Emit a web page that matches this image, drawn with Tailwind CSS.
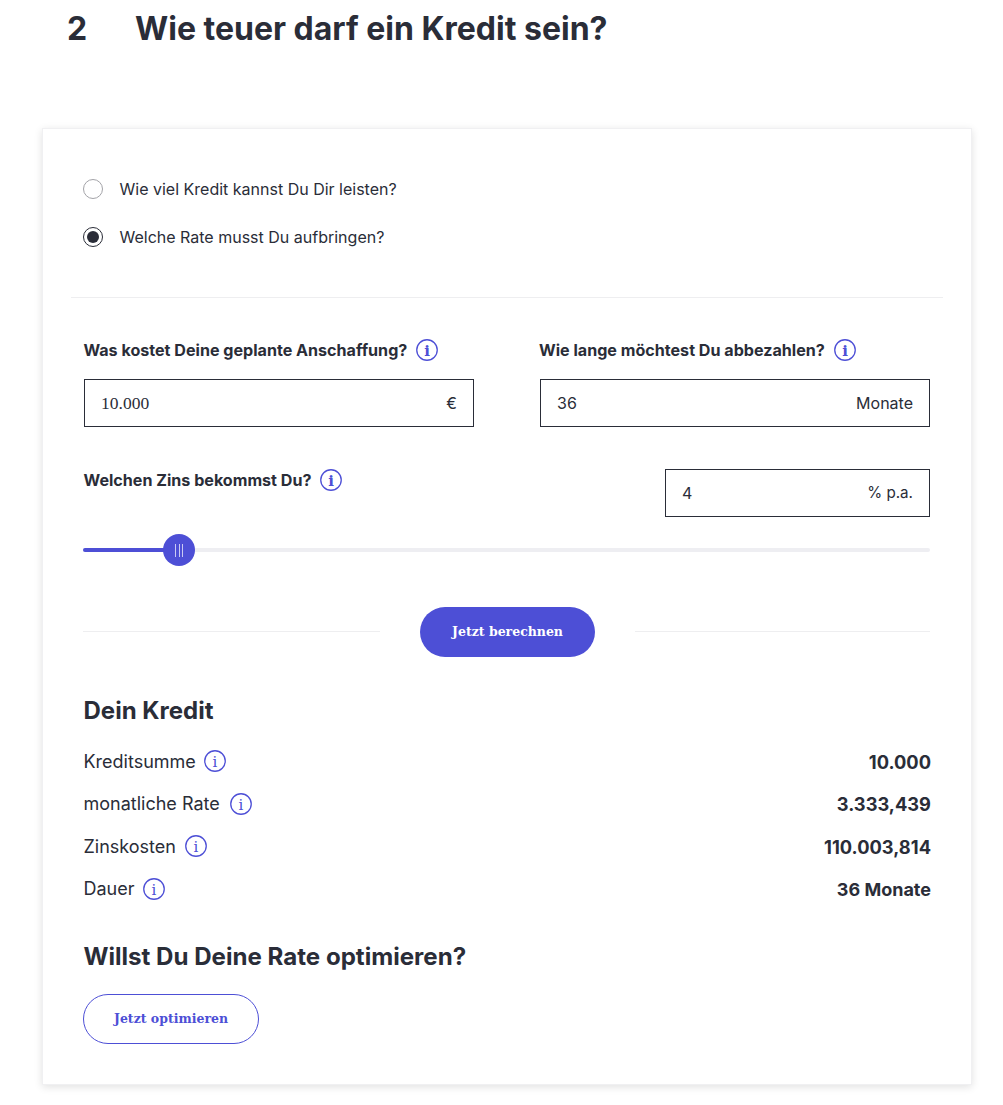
<!DOCTYPE html>
<html lang="de">
<head>
    <meta charset="UTF-8">
    <meta name="viewport" content="width=device-width, initial-scale=1.0">
    <title>Kreditrechner</title>
    <script src="https://cdn.jsdelivr.net/npm/@tailwindcss/browser@4"></script>
</head>
<body class="bg-white text-[#2a2d38] font-['Inter',sans-serif] h-[1105px] overflow-hidden">

    <!-- Section heading -->
    <div class="flex items-center h-[58px] pl-[67px] text-[32px] font-bold">
        <span class="w-[68px]">2</span>
        <h1>Wie teuer darf ein Kredit sein?</h1>
    </div>

    <main class="ml-[42px] mt-[70px] w-[930px] h-[957px] border border-[#f0f0f2] shadow-[0_2px_8px_rgba(0,0,0,0.12)] flex flex-col">

        <!-- Radio options -->
        <div class="mx-[28px] pl-[12px] pt-[50px] h-[169px] border-b border-[#eeeef0] flex flex-col gap-[28px] text-[16px]">
            <label class="flex items-center gap-[16px] h-[20px]">
                <span class="w-[20px] h-[20px] rounded-full border border-[#a3a3a8]"></span>
                <span class="pl-[0.5px]">Wie viel Kredit kannst Du Dir leisten?</span>
            </label>
            <label class="flex items-center gap-[16px] h-[20px]">
                <span class="w-[20px] h-[20px] rounded-full border-[1.5px] border-[#2a2d38] flex items-center justify-center">
                    <span class="w-[12px] h-[12px] rounded-full bg-[#2a2d38]"></span>
                </span>
                <span class="pl-[0.5px]">Welche Rate musst Du aufbringen?</span>
            </label>
        </div>

        <div class="pl-[40px] pr-[41px]">
            <!-- Amount and duration -->
            <div class="grid grid-cols-[391px_391px] gap-x-[65px] pt-[41px]">
                <div>
                    <div class="flex items-center gap-[9px] h-[22px] text-[16.1px] font-bold">
                        <span class="pl-[0.5px]">Was kostet Deine geplante Anschaffung?</span>
                        <svg class="w-[22px] h-[22px]" viewBox="0 0 22 22" fill="none"><circle cx="11" cy="11" r="10.25" stroke="#4d4fd6" stroke-width="1.3"/><text x="11" y="16.5" text-anchor="middle" font-family="DejaVu Serif" font-size="15" fill="#4d4fd6">i</text></svg>
                    </div>
                    <div class="mt-[18px] ml-[1px] h-[48px] border border-[#2a2d38] px-[16px] flex items-center justify-between text-[16px]">
                        <span class="font-['Liberation_Serif',serif] text-[17.5px]">10.000</span>
                        <span>€</span>
                    </div>
                </div>
                <div>
                    <div class="flex items-center gap-[9px] h-[22px] text-[16.1px] font-bold">
                        <span>Wie lange möchtest Du abbezahlen?</span>
                        <svg class="w-[22px] h-[22px]" viewBox="0 0 22 22" fill="none"><circle cx="11" cy="11" r="10.25" stroke="#4d4fd6" stroke-width="1.3"/><text x="11" y="16.5" text-anchor="middle" font-family="DejaVu Serif" font-size="15" fill="#4d4fd6">i</text></svg>
                    </div>
                    <div class="mt-[18px] ml-[1px] h-[48px] border border-[#2a2d38] px-[16px] flex items-center justify-between text-[16px]">
                        <span>36</span>
                        <span>Monate</span>
                    </div>
                </div>
            </div>

            <!-- Interest rate -->
            <div class="flex justify-between items-start mt-[42px]">
                <div class="flex items-center gap-[8.5px] h-[22px] text-[16.1px] font-bold">
                    <span class="pl-[0.5px]">Welchen Zins bekommst Du?</span>
                    <svg class="w-[22px] h-[22px]" viewBox="0 0 22 22" fill="none"><circle cx="11" cy="11" r="10.25" stroke="#4d4fd6" stroke-width="1.3"/><text x="11" y="16.5" text-anchor="middle" font-family="DejaVu Serif" font-size="15" fill="#4d4fd6">i</text></svg>
                </div>
                <div class="w-[265px] h-[48px] border border-[#2a2d38] px-[16px] flex items-center justify-between text-[16px]">
                    <span>4</span>
                    <span class="text-[15.2px]">% p.a.</span>
                </div>
            </div>

            <!-- Slider -->
            <div class="relative h-[4px] mt-[31px] rounded-full bg-[#eeeef2]">
                <div class="h-full w-[90px] rounded-full bg-[#4d4fd6]"></div>
                <div class="absolute left-[80px] top-[-14px] w-[32px] h-[32px] rounded-full bg-[#4d4fd6] flex items-center justify-center gap-[2.5px]">
                    <span class="w-px h-[13px] bg-white/70"></span>
                    <span class="w-px h-[13px] bg-white/70"></span>
                    <span class="w-px h-[13px] bg-white/70"></span>
                </div>
            </div>

            <!-- Calculate -->
            <div class="flex items-center mt-[55px]">
                <div class="w-[297px] h-px mb-[2px] bg-[#eeeef0]"></div>
                <button class="ml-[40px] w-[175px] h-[50px] rounded-full bg-[#4d4fd6] text-white text-[12.5px] font-bold font-['DejaVu_Serif',serif]">Jetzt berechnen</button>
                <div class="ml-[40px] flex-1 h-px mb-[2px] bg-[#eeeef0]"></div>
            </div>

            <!-- Result -->
            <h2 class="mt-[38px] pl-[0.5px] text-[24px] leading-[32px] font-bold">Dein Kredit</h2>
            <dl class="mt-[13px] pl-[0.5px] text-[18px]">
                <div class="flex items-center justify-between h-[42.5px]">
                    <dt class="flex items-center gap-[8.5px]">Kreditsumme
                        <svg class="w-[22px] h-[22px]" viewBox="0 0 22 22" fill="none"><circle cx="11" cy="11" r="10.25" stroke="#4d4fd6" stroke-width="1.3"/><text x="11" y="16.5" text-anchor="middle" font-family="DejaVu Serif" font-size="15" fill="#4d4fd6">i</text></svg>
                    </dt>
                    <dd class="pt-[2px] mr-[-1px] font-bold text-[18.3px]">10.000</dd>
                </div>
                <div class="flex items-center justify-between h-[42.5px]">
                    <dt class="flex items-center gap-[10.5px]">monatliche Rate
                        <svg class="w-[22px] h-[22px]" viewBox="0 0 22 22" fill="none"><circle cx="11" cy="11" r="10.25" stroke="#4d4fd6" stroke-width="1.3"/><text x="11" y="16.5" text-anchor="middle" font-family="DejaVu Serif" font-size="15" fill="#4d4fd6">i</text></svg>
                    </dt>
                    <dd class="pt-[2px] mr-[-1px] font-bold text-[18.3px]">3.333,439</dd>
                </div>
                <div class="flex items-center justify-between h-[42.5px]">
                    <dt class="flex items-center gap-[9.5px]">Zinskosten
                        <svg class="w-[22px] h-[22px]" viewBox="0 0 22 22" fill="none"><circle cx="11" cy="11" r="10.25" stroke="#4d4fd6" stroke-width="1.3"/><text x="11" y="16.5" text-anchor="middle" font-family="DejaVu Serif" font-size="15" fill="#4d4fd6">i</text></svg>
                    </dt>
                    <dd class="pt-[2px] mr-[-1px] font-bold text-[18.3px]">110.003,814</dd>
                </div>
                <div class="flex items-center justify-between h-[42.5px]">
                    <dt class="flex items-center gap-[8.5px]">Dauer
                        <svg class="w-[22px] h-[22px]" viewBox="0 0 22 22" fill="none"><circle cx="11" cy="11" r="10.25" stroke="#4d4fd6" stroke-width="1.3"/><text x="11" y="16.5" text-anchor="middle" font-family="DejaVu Serif" font-size="15" fill="#4d4fd6">i</text></svg>
                    </dt>
                    <dd class="pt-[2px] mr-[-1px] font-bold text-[18px]">36 Monate</dd>
                </div>
            </dl>

            <h2 class="mt-[31px] pl-[0.5px] text-[24.1px] leading-[32px] font-bold">Willst Du Deine Rate optimieren?</h2>
            <button class="mt-[21px] w-[176px] h-[50px] rounded-full border border-[#4d4fd6] text-[#4d4fd6] text-[12.5px] font-bold font-['DejaVu_Serif',serif]">Jetzt optimieren</button>
        </div>
    </main>
</body>
</html>
